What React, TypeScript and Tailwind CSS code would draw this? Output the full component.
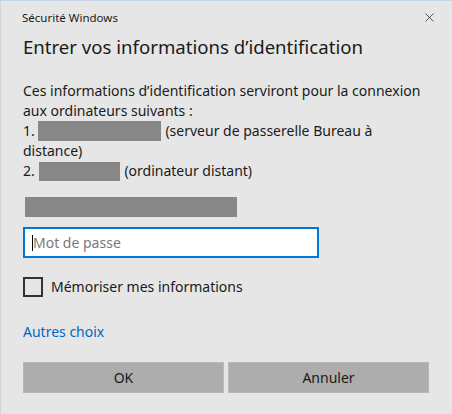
import { X } from 'lucide-react'

export default function App() {
  return (
    <div
      className="w-[452px] h-[414px] bg-[#e6e6e6] border-t border-[#c5d6ea] border-l border-l-[#d4d4d4] flex flex-col text-[#1a1a1a]"
      style={{ fontFamily: '"Noto Sans", "Open Sans", sans-serif' }}
    >
      {/* Barre de titre */}
      <div className="flex items-center justify-between pl-[21px] pr-[15px] pt-[7px] h-[26px]">
        <span className="text-[11.5px] leading-none">Sécurité Windows</span>
        <X size={15} strokeWidth={1.2} className="text-[#222]" />
      </div>

      <div className="px-[22px] flex flex-col">
        <h1 className="text-[18.6px] leading-[28px] mt-[6px] font-normal">Entrer vos informations d’identification</h1>

        <div className="mt-[20px] text-[14px] leading-[20px]">
          <p>Ces informations d’identification serviront pour la connexion aux ordinateurs suivants :</p>
          <p className="flex flex-wrap items-center">
            <span>1.&nbsp;</span>
            <span className="inline-block w-[123px] h-[20px] bg-[#878787] mr-[4px]" />
            <span>(serveur de passerelle Bureau à</span>
            <span className="w-full">distance)</span>
          </p>
          <p className="flex items-center">
            <span>2.&nbsp;</span>
            <span className="inline-block w-[81px] h-[19px] bg-[#878787] ml-[1px] mr-[4px]" />
            <span>(ordinateur distant)</span>
          </p>
        </div>

        <div className="mt-[16px] w-[212px] h-[20px] bg-[#878787] ml-[2px]" />

        <div className="mt-[10px] w-[296px] h-[31px] bg-white border-2 border-[#0078d7] flex items-center pl-[7px]">
          <span className="w-px h-[16px] bg-black" />
          <span className="text-[14px] text-[#7a7a7a]">Mot de passe</span>
        </div>

        <label className="mt-[18px] flex items-center gap-[8px]">
          <span className="w-[20px] h-[20px] border-2 border-[#333] bg-transparent" />
          <span className="text-[14px]">Mémoriser mes informations</span>
        </label>

        <a className="mt-[25px] text-[14px] text-[#0067c0] leading-[20px]">Autres choix</a>

        <div className="mt-[20px] flex gap-[4px]">
          <button className="w-[201px] h-[31px] bg-[#adadad] border border-[#b9b9b9] text-[14px]">OK</button>
          <button className="w-[201px] h-[31px] bg-[#adadad] border border-[#b9b9b9] text-[14px]">Annuler</button>
        </div>
      </div>
    </div>
  )
}
